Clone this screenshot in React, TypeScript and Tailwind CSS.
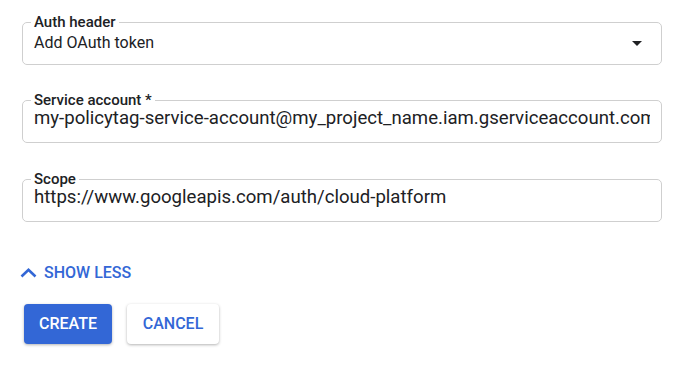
import { ReactNode } from 'react'

function Field({ label, className = '', children }: { label: string; className?: string; children: ReactNode }) {
  return (
    <fieldset className={`min-w-0 rounded-[5px] border border-[#cfcfcf] px-[11px] ${className}`}>
      <legend className="-ml-[3px] px-[3px] text-[15px] leading-[14px] font-medium text-[#202124]">
        {label}
      </legend>
      {children}
    </fieldset>
  )
}

export default function App() {
  return (
    <div className="min-h-screen bg-white font-['Roboto',sans-serif] text-[#202124]">
      <div className="w-[640px] ml-[22px] pt-[15px]">
        {/* Select */}
        <Field label="Auth header">
          <div className="flex items-center justify-between pt-[2px] pb-[9px] text-[16px] leading-[24px]">
            <span>Add OAuth token</span>
            <svg width="10" height="5" viewBox="0 0 10 5" className="mr-[8px]">
              <path d="M0 0 L10 0 L5 5 Z" fill="#202124" />
            </svg>
          </div>
        </Field>

        <Field label="Service account *" className="mt-[28px]">
          <div className="overflow-hidden whitespace-nowrap pb-[13px] text-[18.6px] leading-[22px]">
            my-policytag-service-account@my_project_name.iam.gserviceaccount.com
          </div>
        </Field>

        <Field label="Scope" className="mt-[29px]">
          <div className="whitespace-nowrap pb-[13px] text-[18.6px] leading-[22px]">
            https://www.googleapis.com/auth/cloud-platform
          </div>
        </Field>

        {/* Show less toggle */}
        <button className="mt-[39px] -ml-[2px] flex h-[24px] items-center gap-[7px] text-[16px] leading-[24px] font-medium text-[#3367d6]">
          <svg width="17" height="10" viewBox="0 0 17 10">
            <polyline
              points="1.5,8.5 8.5,1.8 15.5,8.5"
              fill="none"
              stroke="#3367d6"
              strokeWidth="2.6"
            />
          </svg>
          SHOW LESS
        </button>

        <div className="mt-[19px] ml-[2px] flex gap-[15px]">
          <button className="h-[40px] w-[88px] rounded-[4px] bg-[#3367d6] text-[16px] font-medium text-white shadow-[0_1px_3px_rgba(0,0,0,0.3)]">
            CREATE
          </button>
          <button className="h-[40px] w-[92px] rounded-[4px] bg-white text-[16px] font-medium text-[#3367d6] shadow-[0_1px_3px_rgba(0,0,0,0.3)]">
            CANCEL
          </button>
        </div>
      </div>
    </div>
  )
}
